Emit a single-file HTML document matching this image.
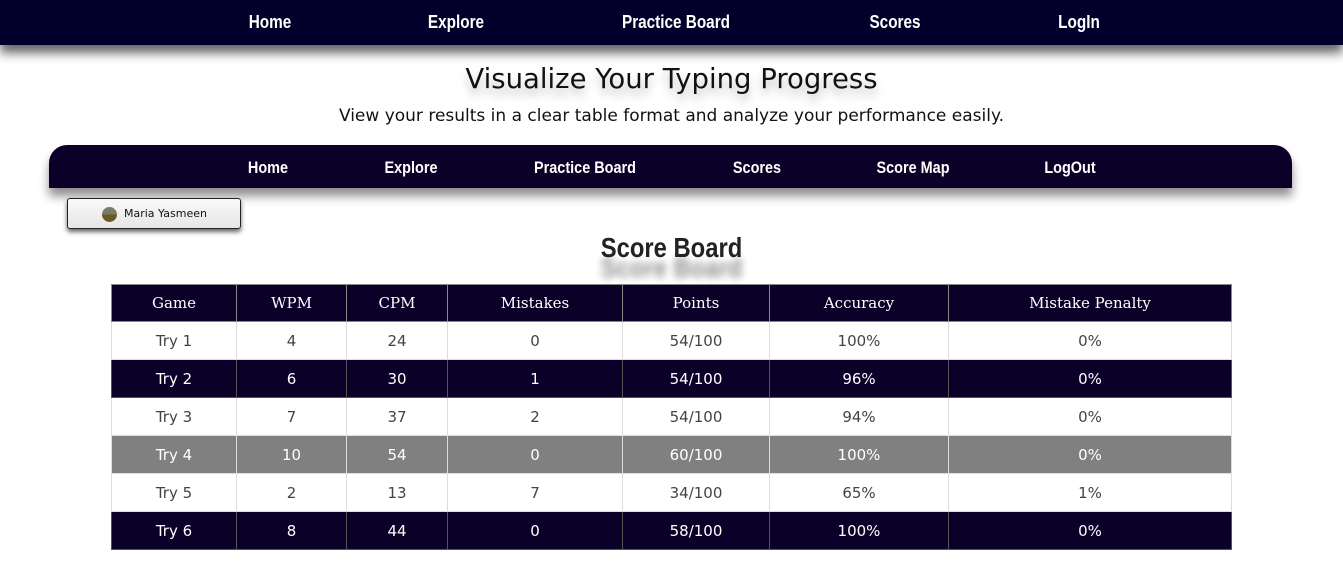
<!DOCTYPE html>
<html><head><style>
body{margin:0;width:1343px;height:581px;background:#fff;font-family:"DejaVu Sans","Liberation Sans",sans-serif;overflow:hidden;position:relative}
.nav1{position:absolute;left:0;top:0;width:1343px;height:45px;background:#02002a;box-shadow:0 8px 10px rgba(0,0,0,.6)}
.nav a,.nav1 a{position:absolute;color:#fff;font-family:"Liberation Sans",sans-serif;font-weight:bold;font-size:18px;text-decoration:none;white-space:nowrap;transform:translateX(-50%) scaleX(.85)}
.nav1 a{top:12px}
h1{position:absolute;top:63px;left:0;width:1343px;text-align:center;margin:0;font-weight:normal;font-size:27.5px;color:#111;text-shadow:0 7px 9px rgba(0,0,0,.25)}
.sub{position:absolute;top:106px;left:0;width:1343px;text-align:center;font-size:17px;color:#111}
.nav{position:absolute;left:49px;top:145px;width:1243px;height:43px;background:#0b0028;border-radius:18px 18px 0 0;box-shadow:0 8px 10px rgba(0,0,0,.45)}
.nav a{top:13px;font-size:17px}
.user{position:absolute;left:67px;top:198px;width:174px;height:31px;box-sizing:border-box;border:1px solid #222;border-radius:3px;background:linear-gradient(#fafafa,#e6e6e6);box-shadow:0 3px 5px rgba(0,0,0,.6);font-size:11px;color:#111}
.user i{position:absolute;left:34px;top:8px;width:15px;height:15px;border-radius:50%;background:linear-gradient(#7a7a6a 45%,#6b5a20 55%)}
.user span{position:absolute;left:56px;top:8px}
.sb{position:absolute;top:232px;left:0;width:1343px;text-align:center;font-family:"Liberation Sans",sans-serif;font-weight:bold;font-size:28px;color:#222;transform:scaleX(.85);text-shadow:0 20px 8px rgba(0,0,0,.45)}
table{position:absolute;left:111px;top:284px;border-collapse:collapse;width:1121px}
td,th{border:1px solid #ddd;text-align:center;height:37px;padding:0;font-size:15px;color:#444}
th{background:#0b0028;color:#fff;font-family:"DejaVu Serif",serif;font-size:15px;font-weight:normal;border-color:#888;height:36px}
tr.d td{background:#0b0028;color:#fff;border-color:#555}
tr.g td{background:#808080;color:#fff;border-color:#ddd}
</style></head><body>
<div class="nav1"><a style="left:270px">Home</a><a style="left:456px">Explore</a><a style="left:676px">Practice Board</a><a style="left:895px">Scores</a><a style="left:1079px">LogIn</a></div>
<h1>Visualize Your Typing Progress</h1>
<div class="sub">View your results in a clear table format and analyze your performance easily.</div>
<div class="nav"><a style="left:219px">Home</a><a style="left:362px">Explore</a><a style="left:536px">Practice Board</a><a style="left:708px">Scores</a><a style="left:864px">Score Map</a><a style="left:1021px">LogOut</a></div>
<div class="user"><i></i><span>Maria Yasmeen</span></div>
<div class="sb">Score Board</div>
<table>
<colgroup><col style="width:125px"><col style="width:110px"><col style="width:101px"><col style="width:175px"><col style="width:147px"><col style="width:179px"><col></colgroup>
<tr><th>Game</th><th>WPM</th><th>CPM</th><th>Mistakes</th><th>Points</th><th>Accuracy</th><th>Mistake Penalty</th></tr>
<tr><td>Try 1</td><td>4</td><td>24</td><td>0</td><td>54/100</td><td>100%</td><td>0%</td></tr>
<tr class="d"><td>Try 2</td><td>6</td><td>30</td><td>1</td><td>54/100</td><td>96%</td><td>0%</td></tr>
<tr><td>Try 3</td><td>7</td><td>37</td><td>2</td><td>54/100</td><td>94%</td><td>0%</td></tr>
<tr class="g"><td>Try 4</td><td>10</td><td>54</td><td>0</td><td>60/100</td><td>100%</td><td>0%</td></tr>
<tr><td>Try 5</td><td>2</td><td>13</td><td>7</td><td>34/100</td><td>65%</td><td>1%</td></tr>
<tr class="d"><td>Try 6</td><td>8</td><td>44</td><td>0</td><td>58/100</td><td>100%</td><td>0%</td></tr>
</table>
</body></html>
